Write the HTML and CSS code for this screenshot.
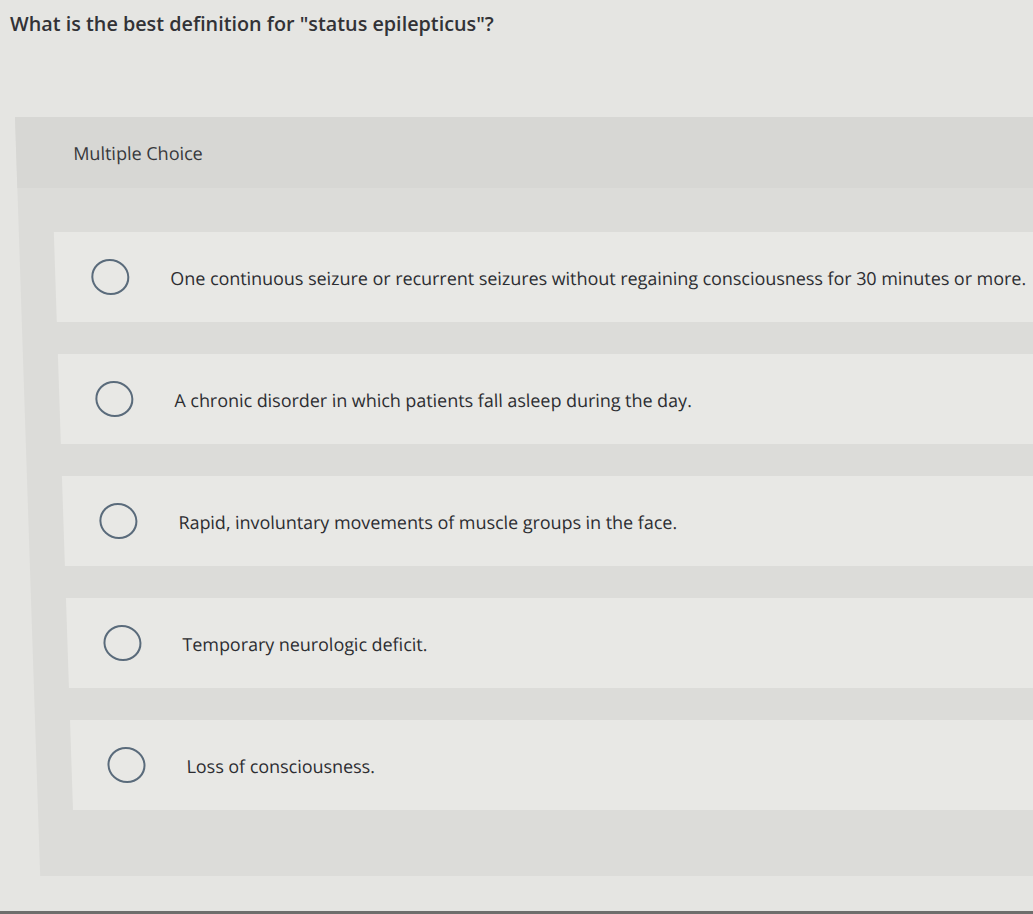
FILE: index.html
```html
<!DOCTYPE html>
<html lang="en">
<head>
<meta charset="utf-8">
<title>Multiple Choice</title>
<link rel="stylesheet" href="styles.css">
</head>
<body>
<h1 class="question">What is the best definition for "status epilepticus"?</h1>
<section class="panel">
  <div class="panel-head">Multiple Choice</div>
  <div class="options">
    <label class="option"><span class="radio"></span><span class="opt-text">One continuous seizure or recurrent seizures without regaining consciousness for 30 minutes or more.</span></label>
    <label class="option"><span class="radio"></span><span class="opt-text">A chronic disorder in which patients fall asleep during the day.</span></label>
    <label class="option"><span class="radio"></span><span class="opt-text">Rapid, involuntary movements of muscle groups in the face.</span></label>
    <label class="option"><span class="radio"></span><span class="opt-text">Temporary neurologic deficit.</span></label>
    <label class="option"><span class="radio"></span><span class="opt-text">Loss of consciousness.</span></label>
  </div>
</section>
<div class="bottom-line"></div>
</body>
</html>
```
FILE: styles.css
```css
html, body {
  margin: 0;
  padding: 0;
  overflow: hidden;
}
body {
  width: 1033px;
  height: 914px;
  background: #e5e5e2;
  font-family: "Open Sans", Lato, "Liberation Sans", sans-serif;
  color: #2e2f33;
  position: relative;
}
.question {
  margin: 0;
  padding: 11px 0 0 10px;
  font-size: 19.8px;
  line-height: 26px;
  font-weight: 600;
  color: #323236;
  height: 105px;
  box-sizing: border-box;
}
.panel {
  margin-left: 15px;
  margin-top: 12px;
  background: #dcdcd9;
  transform: skewX(1.9deg);
  transform-origin: 0 0;
  height: 759px;
  box-sizing: border-box;
}
.panel-head {
  height: 71px;
  background: #d7d7d4;
  padding-left: 57px;
  display: flex;
  align-items: center;
  font-size: 18px;
  color: #38393c;
}
.options {
  display: flex;
  flex-direction: column;
  gap: 32px;
  padding: 44px 0 0 35px;
}
.option {
  height: 90px;
  background: #e8e8e5;
  display: flex;
  align-items: center;
  padding-left: 36px;
}
.radio {
  flex: none;
  width: 34px;
  height: 32px;
  border: 2px solid #5a6b7b;
  border-radius: 50%;
  margin-right: 41px;
}
.opt-text {
  font-size: 17.9px;
  color: #2c2d31;
  white-space: nowrap;
  padding-top: 2px;
}
.bottom-line {
  position: absolute;
  left: 0;
  right: 0;
  bottom: 0;
  height: 3px;
  background: #6e6e6c;
}
```
